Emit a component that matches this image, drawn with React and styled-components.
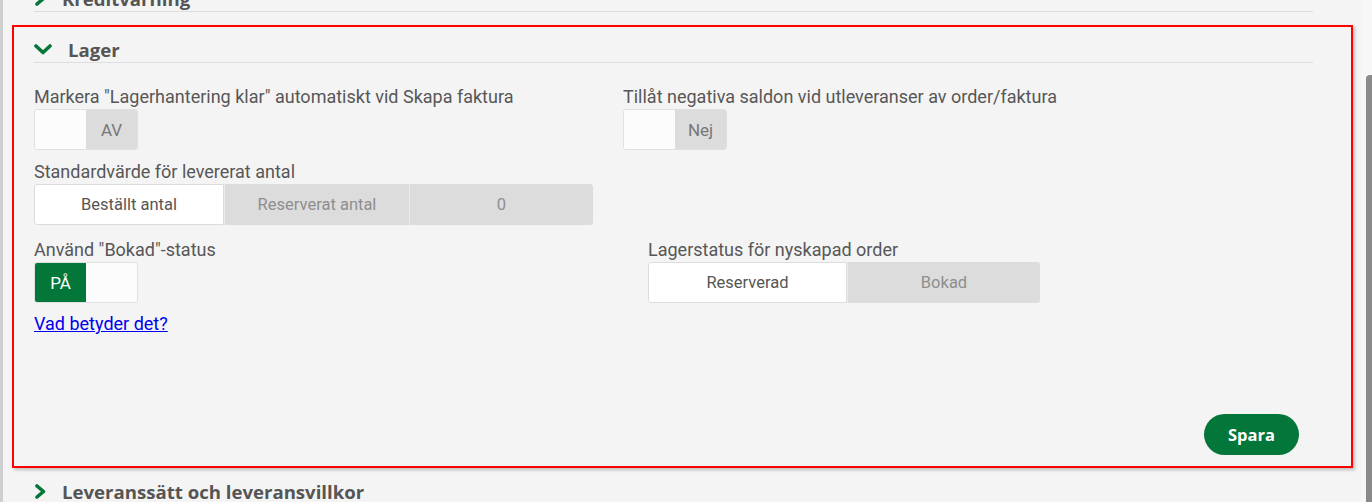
import React, { useState } from 'react';
import styled, { createGlobalStyle } from 'styled-components';

const GREEN = '#03763a';

const GlobalStyle = createGlobalStyle`
  html, body {
    margin: 0;
    padding: 0;
    background: #f4f4f4;
    overflow: hidden;
  }
  body {
    font-family: Roboto, 'Liberation Sans', sans-serif;
    color: #555;
  }
`;

const Chevron = ({ open }) =>
  open ? (
    <svg width='18' height='11' viewBox='0 0 18 11'>
      <path d='M2 2 L9 8.5 L16 2' fill='none' stroke={GREEN} strokeWidth='3.6' strokeLinecap='round' strokeLinejoin='round' />
    </svg>
  ) : (
    <svg width='13' height='15' viewBox='0 0 13 15'>
      <path d='M3 2 L9.5 7.5 L3 13' fill='none' stroke={GREEN} strokeWidth='3.6' strokeLinecap='round' strokeLinejoin='round' />
    </svg>
  );

const Toggle = ({ on, onLabel, offLabel, onChange }) => (
  <ToggleBox onClick={() => onChange(!on)}>
    <ToggleHalf $active={on}>{on ? onLabel : ''}</ToggleHalf>
    <ToggleHalf $off={!on}>{on ? '' : offLabel}</ToggleHalf>
  </ToggleBox>
);

const Segmented = ({ options, value, onChange, widths }) => (
  <SegmentBox>
    {options.map((o, i) => (
      <Segment key={o} $active={value === o} $w={widths[i]} onClick={() => onChange(o)}>
        {o}
      </Segment>
    ))}
  </SegmentBox>
);

const App = () => {
  const [autoDone, setAutoDone] = useState(false);
  const [negative, setNegative] = useState(false);
  const [bokad, setBokad] = useState(true);
  const [delivered, setDelivered] = useState('Beställt antal');
  const [status, setStatus] = useState('Reserverad');

  return (
    <>
      <GlobalStyle />
      <Page>
        <LeftStrip />
        <Main>
          <Section>
            <SectionHeader>
              <Chevron />
              <span>Kreditvarning</span>
            </SectionHeader>
          </Section>

          <Section $highlight>
            <SectionHeader $open>
              <Chevron open />
              <span>Lager</span>
            </SectionHeader>
            <Body>
              <Row $first={589} $gap={12}>
                <Field>
                  <Label>Markera "Lagerhantering klar" automatiskt vid Skapa faktura</Label>
                  <Toggle on={autoDone} onLabel='PÅ' offLabel='AV' onChange={setAutoDone} />
                </Field>
                <Field>
                  <Label>Tillåt negativa saldon vid utleveranser av order/faktura</Label>
                  <Toggle on={negative} onLabel='Ja' offLabel='Nej' onChange={setNegative} />
                </Field>
              </Row>
              <Row $gap={15}>
                <Field>
                  <Label>Standardvärde för levererat antal</Label>
                  <Segmented
                    options={['Beställt antal', 'Reserverat antal', '0']}
                    widths={[190, 185, 184]}
                    value={delivered}
                    onChange={setDelivered}
                  />
                </Field>
              </Row>
              <Row $first={614}>
                <Field>
                  <Label>Använd "Bokad"-status</Label>
                  <Toggle on={bokad} onLabel='PÅ' offLabel='AV' onChange={setBokad} />
                </Field>
                <Field>
                  <Label>Lagerstatus för nyskapad order</Label>
                  <Segmented
                    options={['Reserverad', 'Bokad']}
                    widths={[199, 193]}
                    value={status}
                    onChange={setStatus}
                  />
                </Field>
              </Row>
              <HelpLink href='#'>Vad betyder det?</HelpLink>
              <Footer>
                <SaveButton>Spara</SaveButton>
              </Footer>
            </Body>
          </Section>

          <Section>
            <SectionHeader $plain>
              <Chevron />
              <span>Leveranssätt och leveransvillkor</span>
            </SectionHeader>
          </Section>
        </Main>
        <ScrollTrack>
          <ScrollThumb />
        </ScrollTrack>
      </Page>
    </>
  );
};

const Page = styled.div`
  display: flex;
  height: 502px;
  overflow: hidden;
`;

const LeftStrip = styled.div`
  width: 3px;
  flex-shrink: 0;
  background: #cfcfcf;
`;

const Main = styled.div`
  flex: 1;
  padding: 0 8px 0 9px;
  margin-top: -24px;
`;

const Section = styled.div`
  padding: ${p => (p.$highlight ? '0 38px 0 20px' : '0 40px 0 22px')};
  margin-top: ${p => (p.$highlight ? '13px' : '0')};
  border: ${p => (p.$highlight ? '2px solid #f00' : 'none')};
  box-shadow: ${p => (p.$highlight ? '2px 2px 3px rgba(0, 0, 0, 0.22)' : 'none')};
`;

const SectionHeader = styled.div`
  box-sizing: border-box;
  height: 36px;
  padding-top: 10px;
  display: flex;
  align-items: center;
  gap: ${p => (p.$open ? '16px' : '15px')};
  line-height: 25px;
  border-bottom: ${p => (p.$plain ? 'none' : '1px solid #dedede')};
  font-family: 'Open Sans', sans-serif;
  font-weight: 700;
  font-size: 18.6px;
  color: #555;

  svg {
    flex-shrink: 0;
  }
`;

const Body = styled.div`
  padding: 24px 0 11px;
`;

const Row = styled.div`
  display: flex;
  margin-bottom: ${p => p.$gap || 0}px;

  & > *:first-child {
    width: ${p => (p.$first ? `${p.$first}px` : 'auto')};
    flex-shrink: 0;
  }
`;

const Field = styled.div`
  display: flex;
  flex-direction: column;
  align-items: flex-start;
`;

const Label = styled.div`
  font-size: 18px;
  line-height: 20px;
  color: #575757;
  margin-bottom: 2px;
  white-space: nowrap;
`;

const ToggleBox = styled.div`
  box-sizing: border-box;
  display: flex;
  width: 104px;
  height: 41px;
  border: 1px solid #e0e0e0;
  border-radius: 3px;
  overflow: hidden;
  cursor: pointer;
`;

const ToggleHalf = styled.div`
  flex: 1;
  display: flex;
  align-items: center;
  justify-content: center;
  font-size: 17px;
  background: ${p => (p.$active ? GREEN : p.$off ? '#dcdcdc' : '#fcfcfc')};
  color: ${p => (p.$active ? '#fff' : '#777')};
`;

const SegmentBox = styled.div`
  display: flex;
  height: 41px;
  border-radius: 3px;
  overflow: hidden;
`;

const Segment = styled.div`
  box-sizing: border-box;
  width: ${p => p.$w}px;
  display: flex;
  align-items: center;
  justify-content: center;
  font-size: 16.5px;
  cursor: pointer;
  background: ${p => (p.$active ? '#fff' : '#dcdcdc')};
  color: ${p => (p.$active ? '#555' : '#8e8e8e')};
  border: ${p => (p.$active ? '1px solid #dcdcdc' : 'none')};
  border-radius: ${p => (p.$active ? '3px 0 0 3px' : '0')};

  & + & {
    border-left: ${p => (p.$active ? '1px solid #dcdcdc' : '1px solid #ececec')};
  }
`;

const HelpLink = styled.a`
  display: inline-block;
  margin-top: 11px;
  font-size: 18px;
  line-height: 20px;
  color: #0000ee;
  text-decoration: underline;
`;

const Footer = styled.div`
  display: flex;
  justify-content: flex-end;
  padding-right: 14px;
  margin-top: 80px;
`;

const SaveButton = styled.button`
  width: 95px;
  height: 41px;
  border: none;
  border-radius: 21px;
  background: ${GREEN};
  color: #fff;
  font-family: 'Open Sans', sans-serif;
  font-weight: 700;
  font-size: 16.5px;
  cursor: pointer;
`;

const ScrollTrack = styled.div`
  width: 11px;
  flex-shrink: 0;
  background: #f7f7f7;
  display: flex;
  justify-content: flex-end;
  padding-top: 75px;
`;

const ScrollThumb = styled.div`
  width: 6px;
  height: 100%;
  background: #8a8a8a;
  border-radius: 4px 0 0 0;
`;

export default App;
